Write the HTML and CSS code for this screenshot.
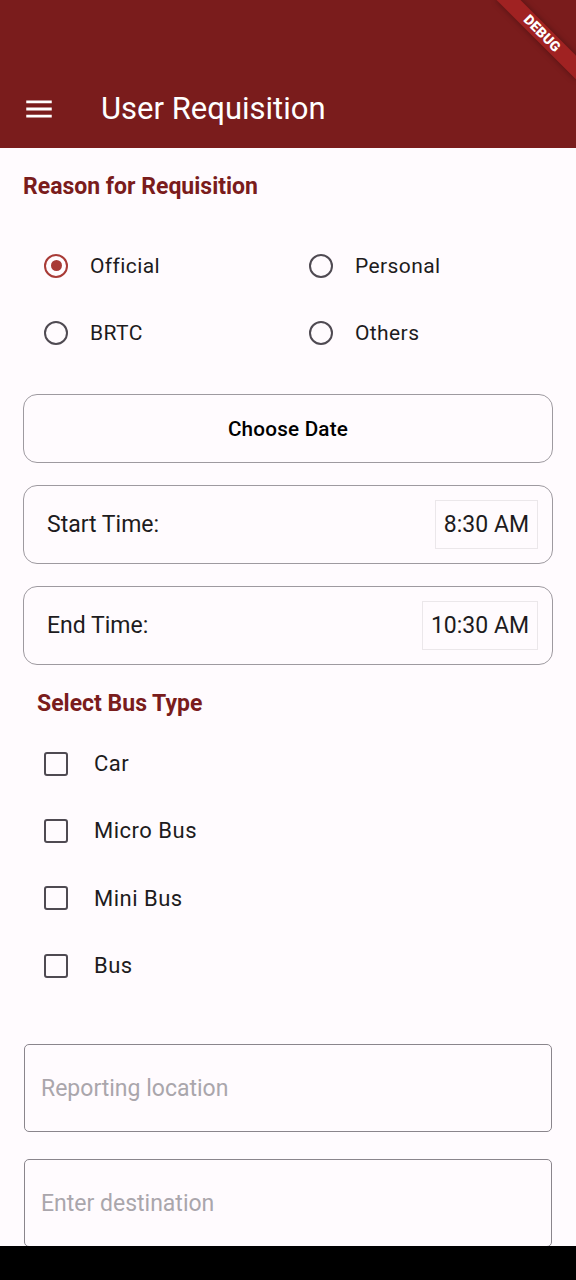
FILE: index.html
```html
<!DOCTYPE html>
<html lang="en">
<head>
<meta charset="utf-8">
<title>User Requisition</title>
<link rel="stylesheet" href="styles.css">
</head>
<body>
<div class="screen">
  <header class="appbar">
    <button class="menu-btn" aria-label="Menu">
      <svg width="34" height="34" viewBox="0 0 24 24"><path d="M3 18h18v-2H3v2zm0-5h18v-2H3v2zm0-7v2h18V6H3z" fill="#fff"/></svg>
    </button>
    <h1 class="title">User Requisition</h1>
    <div class="debug">DEBUG</div>
  </header>

  <main class="content">
    <h2 class="section-title">Reason for Requisition</h2>
    <div class="radio-grid">
      <label class="radio-item"><span class="radio checked"></span><span class="opt-text">Official</span></label>
      <label class="radio-item"><span class="radio"></span><span class="opt-text">Personal</span></label>
      <label class="radio-item"><span class="radio"></span><span class="opt-text">BRTC</span></label>
      <label class="radio-item"><span class="radio"></span><span class="opt-text">Others</span></label>
    </div>

    <button class="date-btn">Choose Date</button>

    <div class="time-card">
      <span class="time-label">Start Time:</span>
      <span class="time-value">8:30 AM</span>
    </div>
    <div class="time-card">
      <span class="time-label">End Time:</span>
      <span class="time-value">10:30 AM</span>
    </div>

    <h2 class="section-title bus-title">Select Bus Type</h2>
    <div class="check-list">
      <label class="check-item"><span class="checkbox"></span><span class="opt-text">Car</span></label>
      <label class="check-item"><span class="checkbox"></span><span class="opt-text">Micro Bus</span></label>
      <label class="check-item"><span class="checkbox"></span><span class="opt-text">Mini Bus</span></label>
      <label class="check-item"><span class="checkbox"></span><span class="opt-text">Bus</span></label>
    </div>

    <div class="field"><span class="placeholder">Reporting location</span></div>
    <div class="field"><span class="placeholder">Enter destination</span></div>
  </main>

  <div class="navbar"></div>
</div>
</body>
</html>
```

FILE: styles.css
```css
* { box-sizing: border-box; }
html, body { margin: 0; padding: 0; }
body {
  font-family: Roboto, "Noto Sans", "Liberation Sans", sans-serif;
  background: #000;
}
.screen {
  width: 576px;
  height: 1280px;
  display: flex;
  flex-direction: column;
  overflow: hidden;
  background: #fffbfe;
  position: relative;
}
.appbar {
  height: 148px;
  flex: 0 0 148px;
  background: #7a1c1c;
  display: flex;
  align-items: flex-end;
  padding: 0 0 22px 22px;
  position: relative;
  overflow: hidden;
}
.menu-btn {
  width: 34px;
  height: 34px;
  padding: 0;
  border: 0;
  background: none;
  display: flex;
  align-items: center;
  justify-content: center;
}
.menu-btn svg { display: block; }
.title {
  margin: 0 0 0 45px;
  font-weight: 400;
  font-size: 31px;
  line-height: 34px;
  color: #fff;
  letter-spacing: 0;
}
.debug {
  position: absolute;
  left: 486px;
  top: 25px;
  width: 112px;
  height: 17px;
  transform: rotate(45deg);
  background: #a02222;
  box-shadow: 0 0 6px rgba(0,0,0,0.35);
  color: #fff;
  font-weight: 900;
  font-size: 14px;
  line-height: 17px;
  text-align: center;
  letter-spacing: 0.2px;
}
.content {
  flex: 1;
  overflow: hidden;
  padding: 25px 23px 0 23px;
  display: flex;
  flex-direction: column;
}
.section-title {
  margin: 0;
  font-size: 23px;
  line-height: 28px;
  font-weight: 700;
  color: #7a1c1c;
}
.radio-grid {
  margin-top: 31px;
  display: grid;
  grid-template-columns: 1fr 1fr;
  grid-auto-rows: 67px;
}
.radio-item {
  display: flex;
  align-items: center;
  padding-left: 21px;
}
.radio {
  width: 24px;
  height: 24px;
  border-radius: 50%;
  border: 2.8px solid #4f4a52;
  flex: 0 0 24px;
  display: flex;
  align-items: center;
  justify-content: center;
}
.radio.checked { border-color: #a83a36; }
.radio.checked::after {
  content: "";
  width: 11px;
  height: 11px;
  border-radius: 50%;
  background: #a83a36;
}
.opt-text {
  margin-left: 22px;
  font-size: 21px;
  color: #1d1b20;
  letter-spacing: 0.4px;
}
.date-btn {
  margin-top: 28px;
  height: 69px;
  flex: 0 0 69px;
  border: 1.4px solid #9e9aa0;
  border-radius: 14px;
  background: transparent;
  font-family: inherit;
  font-size: 20.7px;
  font-weight: 500;
  color: #000;
  letter-spacing: 0.2px;
}
.time-card {
  margin-top: 22px;
  height: 79px;
  flex: 0 0 79px;
  border: 1.4px solid #9e9aa0;
  border-radius: 14px;
  display: flex;
  align-items: center;
  justify-content: space-between;
  padding: 0 14px 0 23px;
}
.time-label {
  font-size: 23px;
  color: #1d1b20;
}
.time-value {
  height: 49px;
  border: 1px solid #ebe7ea;
  padding: 0 8px;
  display: flex;
  align-items: center;
  font-size: 23px;
  color: #1d1b20;
}
.bus-title {
  margin-top: 25px;
  margin-left: 14px;
}
.check-list {
  margin-top: 12px;
  display: flex;
  flex-direction: column;
}
.check-item {
  height: 67.3px;
  display: flex;
  align-items: center;
  padding-left: 21px;
}
.checkbox {
  width: 24px;
  height: 24px;
  border: 2.8px solid #4f4a52;
  border-radius: 3px;
  flex: 0 0 24px;
}
.check-item .opt-text {
  margin-left: 26px;
  font-size: 22px;
  letter-spacing: 0.5px;
}
.field {
  margin: 45px 1px 0 1px;
  height: 88px;
  flex: 0 0 88px;
  border: 1.4px solid #8a858c;
  border-radius: 5px;
  display: flex;
  align-items: center;
  padding-left: 16px;
}
.field + .field { margin-top: 27px; }
.placeholder {
  font-size: 23px;
  color: #aaa6ac;
}
.navbar {
  flex: 0 0 34px;
  height: 34px;
  background: #000;
}
```
